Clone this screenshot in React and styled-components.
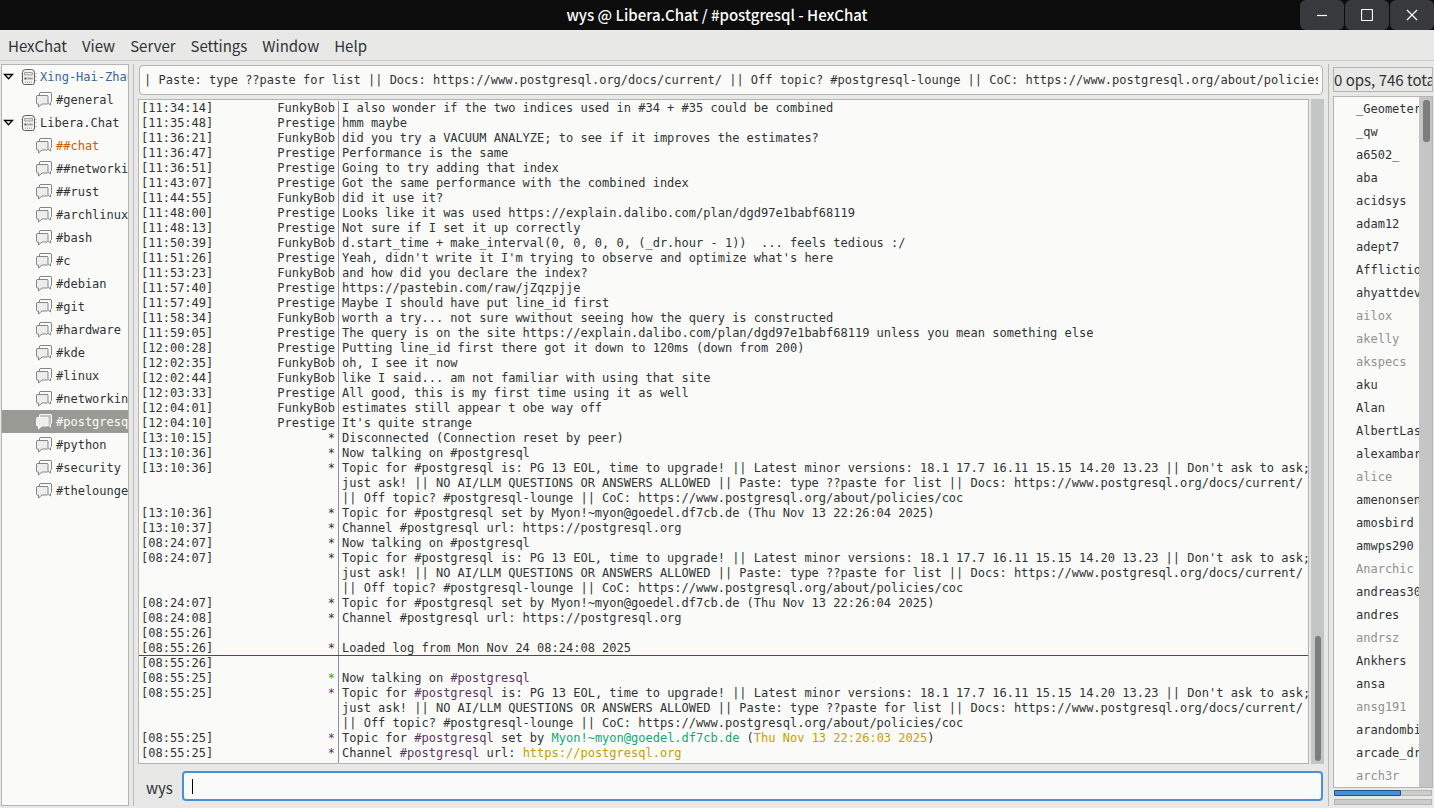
import React, { useState } from 'react'
import styled, { createGlobalStyle, css } from 'styled-components'

const GlobalStyle = createGlobalStyle`
  :root {
    --ink: #2e3436;
    --base: #fafbf8;
    --chrome: #e8e8e6;
    --line: #b3b5b0;
    --track: #c4c6c5;
    --thumb: #7b7e7d;
    --focus: #4a90d9;
    --ui: 'Noto Sans CJK SC', 'Noto Sans', sans-serif;
    --mono: 'DejaVu Sans Mono', 'Liberation Mono', monospace;
  }
  * {
    box-sizing: border-box;
  }
  body {
    margin: 0;
    color: var(--ink);
    background: var(--chrome);
    font-family: var(--ui);
    font-size: 15px;
  }
  button,
  input {
    font: inherit;
    color: inherit;
  }
  ul,
  ol {
    margin: 0;
    padding: 0;
    list-style: none;
  }
`

const AppWindow = styled.div`
  height: 100vh;
  display: flex;
  flex-direction: column;
  overflow: hidden;
`

const TitleBar = styled.header`
  height: 30px;
  flex: none;
  display: grid;
  grid-template-columns: 1fr auto 1fr;
  align-items: center;
  background: #0c0c0c;
  color: #fff;
  h1 {
    grid-column: 2;
    margin: 0;
    font-size: 15px;
    line-height: 30px;
    font-weight: 500;
  }
`

const WindowControls = styled.div`
  display: flex;
  justify-content: flex-end;
  gap: 1px;
`

const WindowButton = styled.button`
  width: 44px;
  height: 30px;
  padding: 0;
  border: 0;
  border-radius: 6px;
  background: #38393d;
  display: grid;
  place-items: center;
  svg {
    display: block;
    fill: none;
    stroke: #fff;
    stroke-width: 1.2;
  }
`

const MenuBar = styled.nav`
  height: 31px;
  flex: none;
  display: flex;
  gap: 15px;
  padding: 0 8px;
  border-bottom: 1px solid #cdcecb;
`

const MenuItem = styled.button`
  padding: 2px 0 0;
  border: 0;
  background: none;
  line-height: 28px;
`

const Panes = styled.div`
  flex: 1;
  min-height: 0;
  display: grid;
  grid-template-columns: 128px 1px minmax(0, 1fr) 1px 100px;
  gap: 4px;
  padding: 3px 1px 2px;
`

const Divider = styled.div`
  background: #b9bab7;
`

const Tree = styled.ul`
  border: 1px solid var(--line);
  background: var(--base);
  overflow: hidden;
  font-family: var(--mono);
  font-size: 12px;
`

const TreeRow = styled.button`
  width: 100%;
  height: 23px;
  padding: 0 0 0 ${(p) => (p.$server ? '1px' : '34px')};
  border: 0;
  background: ${(p) => (p.$selected ? '#999a94' : 'none')};
  color: ${(p) => p.$color || 'inherit'};
  display: flex;
  align-items: center;
  white-space: nowrap;
  text-align: left;
  svg {
    flex: none;
  }
  .arrow {
    margin-right: 7px;
  }
  .icon {
    margin-right: ${(p) => (p.$server ? '3px' : '4px')};
  }
`

const Main = styled.main`
  display: flex;
  flex-direction: column;
  padding: 1px 0 5px;
  min-width: 0;
  min-height: 0;
`

const Topic = styled.input`
  height: 30px;
  margin: 0 1px 4px;
  padding: 0 4px;
  border: 1px solid var(--line);
  border-radius: 4px;
  background: var(--base);
  font-family: var(--mono);
  font-size: 12px;
  outline: none;
`

const LogArea = styled.div`
  flex: 1;
  min-height: 0;
  display: flex;
  gap: 2px;
`

const Log = styled.ol`
  flex: 1;
  min-width: 0;
  display: flex;
  flex-direction: column;
  padding-top: 1px;
  border: 1px solid var(--line);
  background: var(--base);
  overflow: hidden;
  font-family: var(--mono);
  font-size: 12px;
  line-height: 15px;
`

const Line = styled.li`
  display: grid;
  grid-template-columns: 70px 124px minmax(0, 1fr);
  padding-left: 2px;
  min-height: 15px;
  ${(p) =>
    p.$marker &&
    css`
      box-shadow: 0 -1px #8f3902;
    `}
  &:last-child {
    flex: 1;
  }
  time {
    white-space: nowrap;
  }
`

const Nick = styled.span`
  text-align: right;
  color: ${(p) => p.$color || 'inherit'};
`

const Message = styled.span`
  margin: 0 -4px 0 3px;
  padding-left: 3px;
  border-left: 1px solid #8c8da0;
`

const Tint = styled.span`
  color: ${(p) => p.$color};
`

const LogLink = styled.a`
  color: #c4a000;
  text-decoration: none;
`

const ScrollTrack = styled.div`
  flex: none;
  width: 13px;
  display: flex;
  flex-direction: column;
  justify-content: ${(p) => (p.$end ? 'flex-end' : 'flex-start')};
  padding: ${(p) => (p.$end ? '3px 3px 3px 4px' : '3px 2px 3px 4px')};
  background: var(--track);
`

const ScrollThumb = styled.div`
  height: ${(p) => p.$size};
  border-radius: 3px;
  background: var(--thumb);
`

const Entry = styled.form`
  display: flex;
  align-items: center;
  margin: 7px 1px 0 8px;
  label {
    width: 36px;
    padding-top: 4px;
    line-height: 26px;
  }
`

const EntryBox = styled.div`
  flex: 1;
  height: 30px;
  display: flex;
  align-items: center;
  padding-left: 8px;
  border: 2px solid var(--focus);
  border-radius: 4px;
  background: var(--base);
  input {
    flex: 1;
    border: 0;
    padding: 0;
    outline: none;
    background: none;
    caret-color: transparent;
    font-family: var(--mono);
    font-size: 12px;
  }
`

const Caret = styled.span`
  width: 1px;
  height: 15px;
  background: #000;
`

const Side = styled.aside`
  display: flex;
  flex-direction: column;
  min-height: 0;
  padding: 3px 0 1px;
`

const UserCount = styled.div`
  height: 25px;
  flex: none;
  margin-bottom: 4px;
  border: 1px solid var(--line);
  line-height: 24px;
  white-space: nowrap;
  overflow: hidden;
`

const UserFrame = styled.div`
  flex: 1;
  min-height: 0;
  display: flex;
  border: 1px solid var(--line);
  background: var(--base);
`

const UserList = styled.ul`
  flex: 1;
  min-width: 0;
  padding-top: 1px;
  overflow: hidden;
  font-family: var(--mono);
  font-size: 12px;
`

const User = styled.li`
  height: 23px;
  padding-left: 22px;
  line-height: 23px;
  white-space: nowrap;
  color: ${(p) => (p.$away ? '#8f918d' : 'inherit')};
`

const Meter = styled.div`
  height: 6px;
  flex: none;
  margin: ${(p) => p.$top} 1px 0;
  border: 1px solid var(--line);
  background: #cdcecc;
`

const MeterFill = styled.div`
  width: 70%;
  height: 6px;
  margin: -1px;
  border: 1px solid #1c5187;
  border-radius: 1px;
  background: var(--focus);
`

const ArrowIcon = () => (
  <svg className="arrow" width="11" height="8" viewBox="0 0 11 8">
    <path d="M1.500 1.500h8L5.500 5.800z" fill="#fff" stroke="#000" strokeWidth="1.3" />
  </svg>
)

const ServerIcon = () => (
  <svg className="icon" width="16" height="16" viewBox="0 0 16 16">
    <path d="M0 4.500h16M0 7.500h16M0 11.500h16" stroke="#c4c6c4" />
    <path
      d="M4.500 .5h6q3 0 3 3V13q0 2.500-2 2.500h-8q-2 0-2-2.500V3.500q0-3 3-3z"
      fill="#f2f2f2"
      stroke="#5c5e5c"
    />
    <path d="M3.500 3.500h8v2.500h-8z" fill="#e2e2e2" stroke="#a3a3a3" />
    <path d="M3 8h9v3H3z" fill="#cfcfcf" />
    <path d="M7 9.500h4.500" stroke="#9c9c9c" />
    <circle cx="4.500" cy="9.500" r="1.100" fill="#666" />
    <path d="M4.500 12.500v1.500M6.500 12.500v1.500M8.500 12.500v1.500M10.500 12.500v1.500" stroke="#b0b0b0" />
  </svg>
)

const ChatIcon = ({ selected }) => {
  const stroke = selected ? '#f6f6f4' : '#858585'
  const fill = selected ? '#f0f0ee' : '#ededed'
  return (
    <svg className="icon" width="16" height="16" viewBox="0 0 16 16">
      <path
        d="M4 .5h11l.5.5v8.500l-1 1v2.500l-2-1.500h-1V3.500H3.500V1z"
        fill={selected ? '#c4c4c0' : '#fafafa'}
        stroke={stroke}
      />
      <path
        d="M1 3.500h10.500l.5.5v7.500l-.5.5H6l-3.500 3V12H1l-.5-.5V4z"
        fill={fill}
        stroke={stroke}
      />
    </svg>
  )
}

const channels = [
  { name: 'Xing-Hai-Zhan', server: true, color: '#3465a4' },
  { name: '#general' },
  { name: 'Libera.Chat', server: true },
  { name: '##chat', color: '#ce5c00' },
  { name: '##networking' },
  { name: '##rust' },
  { name: '#archlinux' },
  { name: '#bash' },
  { name: '#c' },
  { name: '#debian' },
  { name: '#git' },
  { name: '#hardware' },
  { name: '#kde' },
  { name: '#linux' },
  { name: '#networking' },
  { name: '#postgresql' },
  { name: '#python' },
  { name: '#security' },
  { name: '#thelounge' },
]

const users =
  '_Geometer _qw a6502_ aba acidsys adam12 adept7 Affliction ahyattdev -ailox -akelly -akspecs aku Alan AlbertLasker alexambar -alice amenonsen amosbird amwps290 -Anarchic andreas303 andres -andrsz Ankhers ansa -ansg191 arandombit arcade_droid -arch3r'.split(
    ' '
  )

const purple = '#5c3566'
const gold = '#c4a000'

const channel = <Tint $color={purple}>#postgresql</Tint>
const topicTail =
  " is: PG 13 EOL, time to upgrade! || Latest minor versions: 18.1 17.7 16.11 15.15 14.20 13.23 || Don't ask to ask; just ask! || NO AI/LLM QUESTIONS OR ANSWERS ALLOWED || Paste: type ??paste for list || Docs: https://www.postgresql.org/docs/current/ || Off topic? #postgresql-lounge || CoC: https://www.postgresql.org/about/policies/coc"
const topicText = 'Topic for #postgresql' + topicTail
const topicSetBy =
  'Topic for #postgresql set by Myon!~myon@goedel.df7cb.de (Thu Nov 13 22:26:04 2025)'
const channelUrl = 'Channel #postgresql url: https://postgresql.org'

const lines = [
  ['11:34:14', 'FunkyBob', 'I also wonder if the two indices used in #34 + #35 could be combined'],
  ['11:35:48', 'Prestige', 'hmm maybe'],
  ['11:36:21', 'FunkyBob', 'did you try a VACUUM ANALYZE; to see if it improves the estimates?'],
  ['11:36:47', 'Prestige', 'Performance is the same'],
  ['11:36:51', 'Prestige', 'Going to try adding that index'],
  ['11:43:07', 'Prestige', 'Got the same performance with the combined index'],
  ['11:44:55', 'FunkyBob', 'did it use it?'],
  ['11:48:00', 'Prestige', 'Looks like it was used https://explain.dalibo.com/plan/dgd97e1babf68119'],
  ['11:48:13', 'Prestige', 'Not sure if I set it up correctly'],
  ['11:50:39', 'FunkyBob', 'd.start_time + make_interval(0, 0, 0, 0, (_dr.hour - 1))\u00a0 ... feels tedious :/'],
  ['11:51:26', 'Prestige', "Yeah, didn't write it I'm trying to observe and optimize what's here"],
  ['11:53:23', 'FunkyBob', 'and how did you declare the index?'],
  ['11:57:40', 'Prestige', 'https://pastebin.com/raw/jZqzpjje'],
  ['11:57:49', 'Prestige', 'Maybe I should have put line_id first'],
  ['11:58:34', 'FunkyBob', 'worth a try... not sure wwithout seeing how the query is constructed'],
  ['11:59:05', 'Prestige', 'The query is on the site https://explain.dalibo.com/plan/dgd97e1babf68119 unless you mean something else'],
  ['12:00:28', 'Prestige', 'Putting line_id first there got it down to 120ms (down from 200)'],
  ['12:02:35', 'FunkyBob', 'oh, I see it now'],
  ['12:02:44', 'FunkyBob', 'like I said... am not familiar with using that site'],
  ['12:03:33', 'Prestige', 'All good, this is my first time using it as well'],
  ['12:04:01', 'FunkyBob', 'estimates still appear t obe way off'],
  ['12:04:10', 'Prestige', "It's quite strange"],
  ['13:10:15', '*', 'Disconnected (Connection reset by peer)'],
  ['13:10:36', '*', 'Now talking on #postgresql'],
  ['13:10:36', '*', topicText],
  ['13:10:36', '*', topicSetBy],
  ['13:10:37', '*', channelUrl],
  ['08:24:07', '*', 'Now talking on #postgresql'],
  ['08:24:07', '*', topicText],
  ['08:24:07', '*', topicSetBy],
  ['08:24:08', '*', channelUrl],
  ['08:55:26', '', ''],
  ['08:55:26', '*', 'Loaded log from Mon Nov 24 08:24:08 2025'],
  ['08:55:26', '', '', { marker: true }],
  ['08:55:25', '*', <>Now talking on {channel}</>, { color: '#4e9a06' }],
  ['08:55:25', '*', <>Topic for {channel}{topicTail}</>, { color: purple }],
  [
    '08:55:25',
    '*',
    <>
      Topic for {channel} set by <Tint $color="#11a879">Myon!~myon@goedel.df7cb.de</Tint> (
      <Tint $color={gold}>Thu Nov 13 22:26:03 2025</Tint>)
    </>,
    { color: purple },
  ],
  [
    '08:55:25',
    '*',
    <>
      Channel {channel} url: <LogLink href="https://postgresql.org">https://postgresql.org</LogLink>
    </>,
    { color: purple },
  ],
]

const App = () => {
  const [selected, setSelected] = useState('#postgresql')
  const [draft, setDraft] = useState('')

  return (
    <AppWindow>
      <GlobalStyle />
      <TitleBar>
        <h1>wys @ Libera.Chat / #postgresql - HexChat</h1>
        <WindowControls>
          <WindowButton aria-label="Minimize">
            <svg width="12" height="12" viewBox="0 0 12 12">
              <path d="M1 6.500h10" />
            </svg>
          </WindowButton>
          <WindowButton aria-label="Maximize">
            <svg width="12" height="12" viewBox="0 0 12 12">
              <rect x=".5" y=".5" width="11" height="11" rx="1" />
            </svg>
          </WindowButton>
          <WindowButton aria-label="Close">
            <svg width="12" height="12" viewBox="0 0 12 12">
              <path d="M1 1l10 10M11 1L1 11" />
            </svg>
          </WindowButton>
        </WindowControls>
      </TitleBar>
      <MenuBar>
        {['HexChat', 'View', 'Server', 'Settings', 'Window', 'Help'].map((item) => (
          <MenuItem key={item}>{item}</MenuItem>
        ))}
      </MenuBar>
      <Panes>
        <Tree>
          {channels.map(({ name, server, color }) => (
            <li key={name}>
              <TreeRow
                $server={server}
                $selected={selected === name}
                $color={selected === name ? '#fff' : color}
                onClick={() => setSelected(name)}
              >
                {server && <ArrowIcon />}
                {server ? <ServerIcon /> : <ChatIcon selected={selected === name} />}
                {name}
              </TreeRow>
            </li>
          ))}
        </Tree>
        <Divider />
        <Main>
          <Topic
            aria-label="Topic"
            readOnly
            value="| Paste: type ??paste for list || Docs: https://www.postgresql.org/docs/current/ || Off topic? #postgresql-lounge || CoC: https://www.postgresql.org/about/policies/coc"
          />
          <LogArea>
            <Log>
              {lines.map(([time, nick, text, options = {}], i) => (
                <Line key={i} $marker={options.marker}>
                  <time>[{time}]</time>
                  <Nick $color={options.color}>{nick}</Nick>
                  <Message>{text}</Message>
                </Line>
              ))}
            </Log>
            <ScrollTrack $end>
              <ScrollThumb $size="19%" />
            </ScrollTrack>
          </LogArea>
          <Entry onSubmit={(e) => e.preventDefault()}>
            <label htmlFor="entry">wys</label>
            <EntryBox>
              <Caret />
              <input id="entry" value={draft} onChange={(e) => setDraft(e.target.value)} />
            </EntryBox>
          </Entry>
        </Main>
        <Divider />
        <Side>
          <UserCount>0 ops, 746 total</UserCount>
          <UserFrame>
            <UserList>
              {users.map((user) => (
                <User key={user} $away={user[0] === '-'}>
                  {user.replace('-', '')}
                </User>
              ))}
            </UserList>
            <ScrollTrack>
              <ScrollThumb $size="42px" />
            </ScrollTrack>
          </UserFrame>
          <Meter $top="2px">
            <MeterFill />
          </Meter>
          <Meter $top="3px" />
        </Side>
      </Panes>
    </AppWindow>
  )
}

export default App
